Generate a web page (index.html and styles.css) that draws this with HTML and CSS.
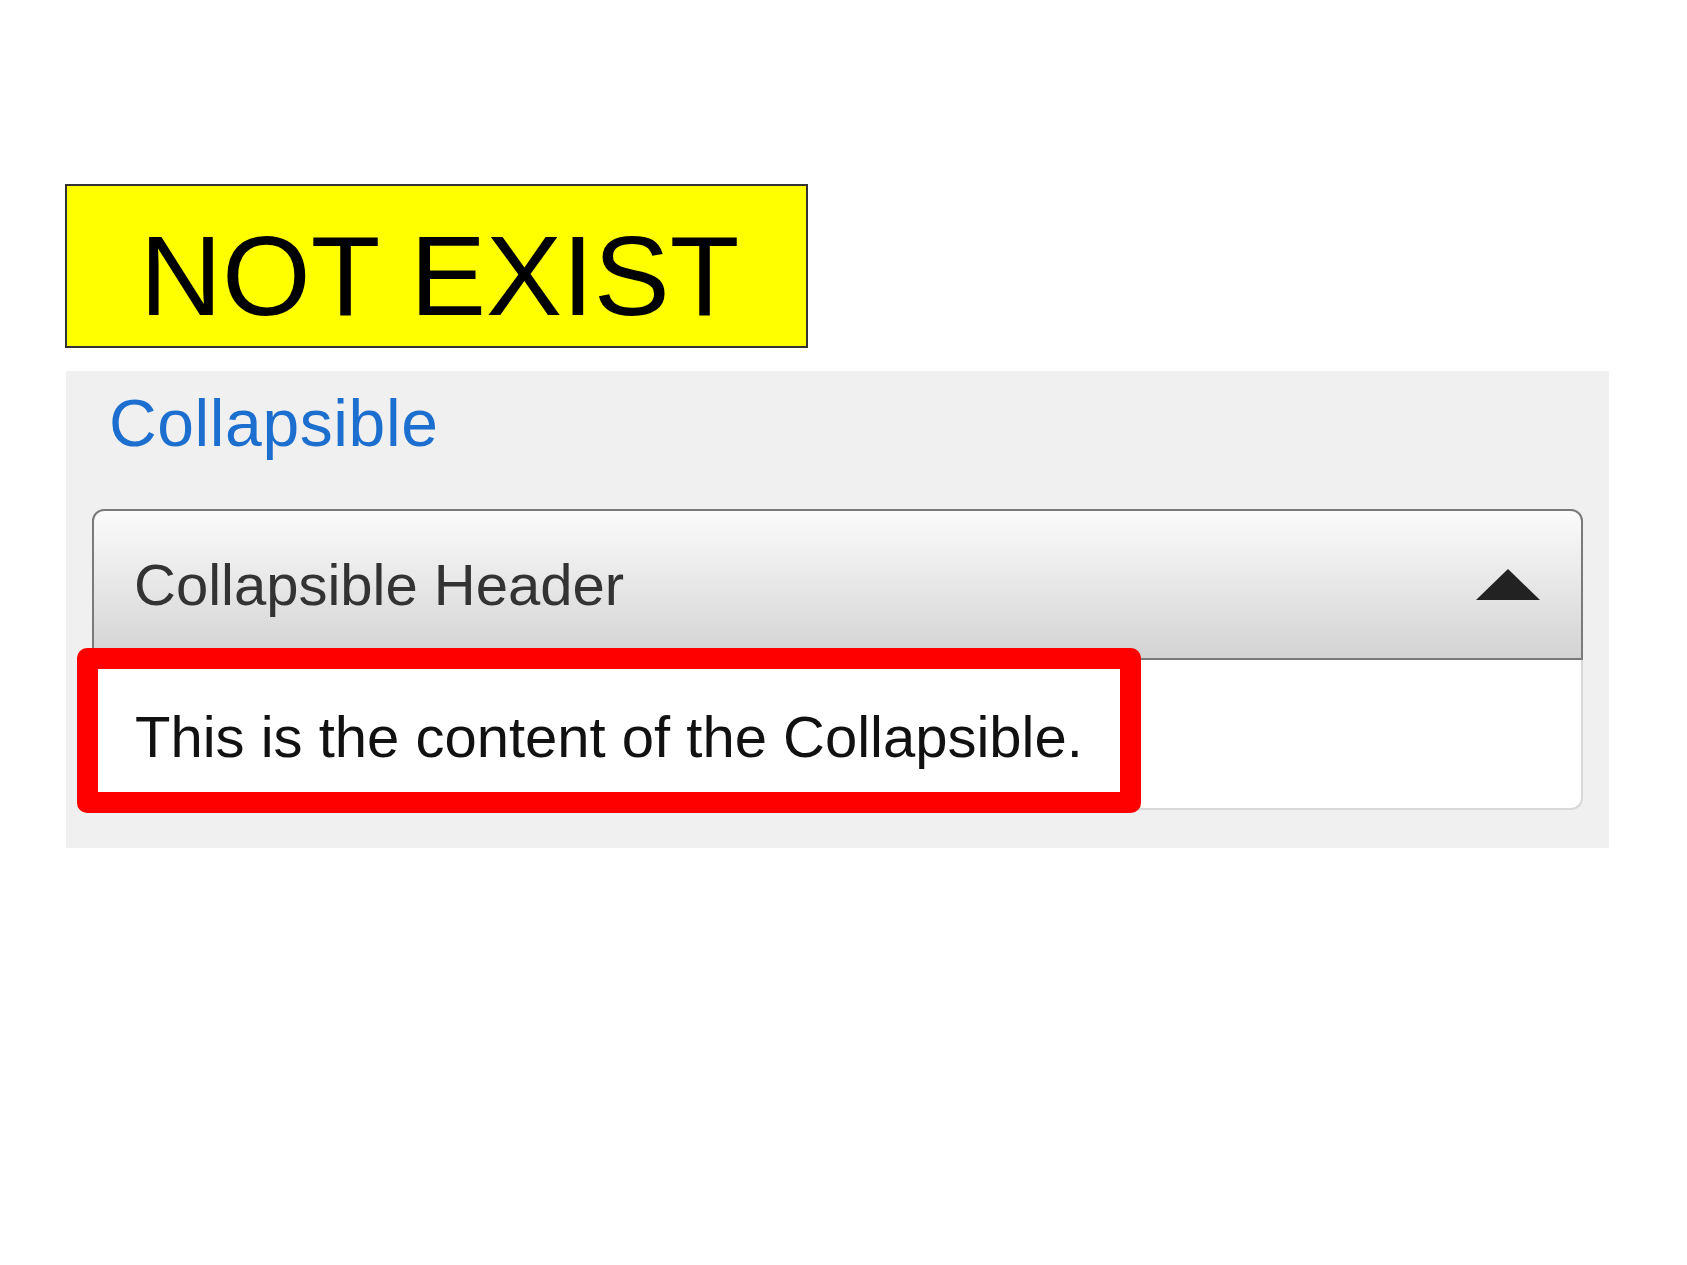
FILE: index.html
```html
<!DOCTYPE html>
<html lang="en">
<head>
<meta charset="utf-8">
<title>Collapsible</title>
<link rel="stylesheet" href="styles.css">
</head>
<body>
<div class="label">NOT EXIST</div>
<section class="panel">
  <h2 class="title">Collapsible</h2>
  <div class="collapsible">
    <div class="col-header">
      <span class="col-header-text">Collapsible Header</span>
      <svg class="caret" width="64" height="31" viewBox="0 0 64 31"><polygon points="32,0 64,31 0,31" fill="#222"/></svg>
    </div>
    <div class="col-content">
      <p class="col-text">This is the content of the Collapsible.</p>
    </div>
    <div class="highlight"></div>
  </div>
</section>
</body>
</html>
```
FILE: styles.css
```css
html, body {
  margin: 0;
  padding: 0;
  background: #ffffff;
  font-family: "Liberation Sans", Arial, sans-serif;
}

.label {
  box-sizing: border-box;
  margin: 184px 0 0 65px;
  width: 743px;
  height: 164px;
  border: 2px solid #333;
  background: #ffff00;
  color: #000;
  font-size: 114px;
  display: flex;
  align-items: center;
  justify-content: center;
  padding: 19px 0 0 6px;
}

.panel {
  box-sizing: border-box;
  margin: 23px 0 0 66px;
  width: 1543px;
  height: 477px;
  background: #f0f0f0;
  padding: 12px 26px 0;
}

.title {
  margin: 0 0 46px;
  padding-left: 17px;
  font-size: 66px;
  letter-spacing: 0.6px;
  line-height: 80px;
  font-weight: normal;
  color: #1c6fcf;
}

.collapsible {
  position: relative;
  width: 1491px;
}

.col-header {
  box-sizing: border-box;
  height: 151px;
  border: 2px solid #7a7a7a;
  border-radius: 12px 12px 0 0;
  background: linear-gradient(#fbfbfb, #d3d3d3);
  display: flex;
  align-items: center;
  justify-content: space-between;
  padding: 0 41px 0 40px;
}

.col-header-text {
  font-size: 58px;
  color: #333;
}

.caret {
  display: block;
}

.col-content {
  box-sizing: border-box;
  height: 150px;
  background: #fff;
  border: 2px solid #d8d8d8;
  border-top: none;
  border-radius: 0 0 12px 12px;
  display: flex;
  align-items: center;
  padding: 4px 0 0 41px;
}

.col-text {
  margin: 0;
  font-size: 58px;
  color: #111;
}

.highlight {
  position: absolute;
  box-sizing: border-box;
  left: -15px;
  top: 139px;
  width: 1064px;
  height: 165px;
  border: 21px solid #ff0000;
  border-radius: 10px;
}
```
